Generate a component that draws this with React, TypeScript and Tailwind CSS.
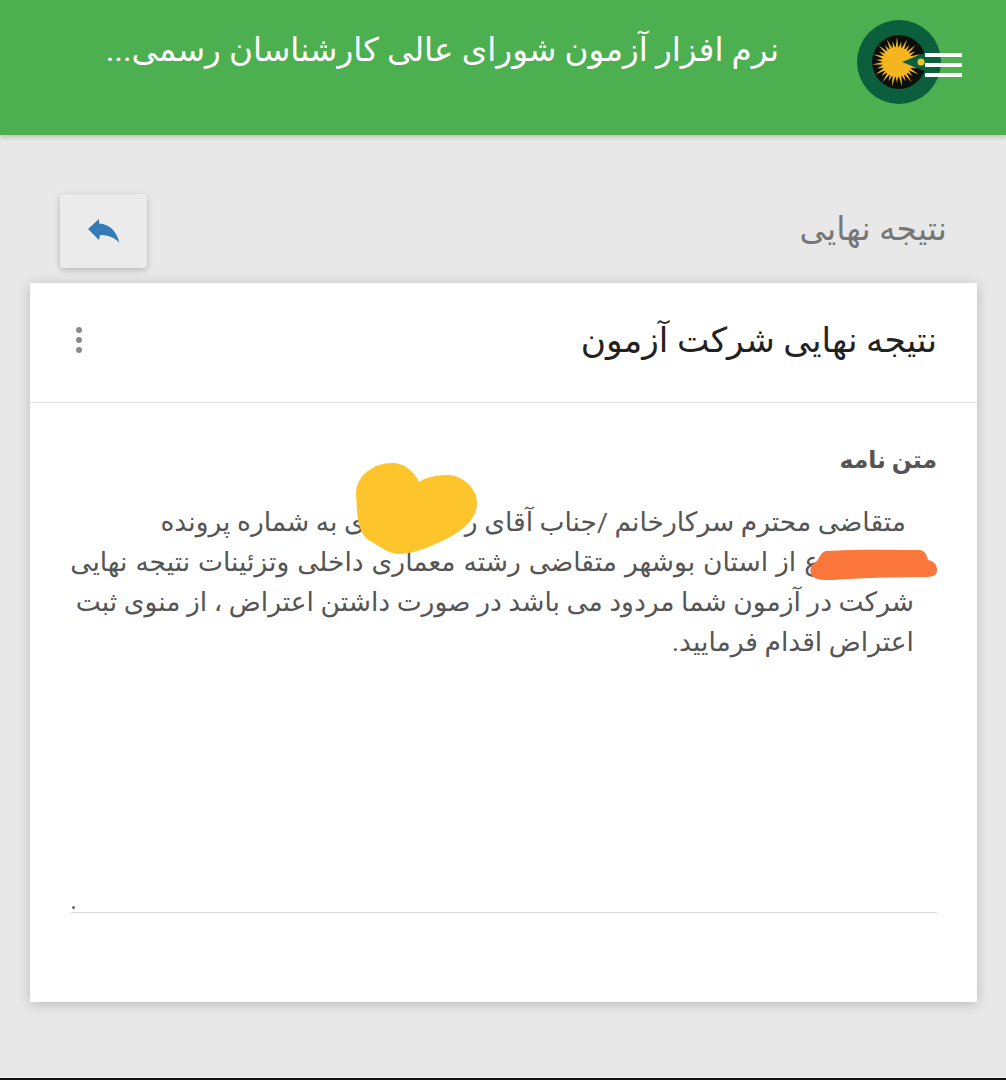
import React from 'react';

function Logo() {
  const spikes = [];
  for (let i = 0; i < 30; i++) {
    const a = ((i + 0.5) / 30) * Math.PI * 2;
    if (Math.abs(Math.sin(a)) < 0.22 && Math.cos(a) > 0) continue;
    const len = i % 2 === 0 ? 25 : 21;
    const b = 0.1;
    spikes.push(
      `${40 + Math.cos(a - b) * 14},${42 + Math.sin(a - b) * 14} ${40 + Math.cos(a) * len},${42 + Math.sin(a) * len} ${40 + Math.cos(a + b) * 14},${42 + Math.sin(a + b) * 14}`
    );
  }
  return (
    <svg width="84" height="84" viewBox="0 0 84 84" className="shrink-0">
      <circle cx="42" cy="42" r="42" fill="#0b5f3c" />
      <circle cx="42" cy="42" r="27" fill="#0a0f0c" />
      <circle cx="40" cy="42" r="15" fill="#f5b51e" />
      {spikes.map((p, i) => (
        <polygon key={i} points={p} fill="#f5b51e" />
      ))}
      <polygon points="45,42 70,32 70,52" fill="#0b5f3c" />
      <circle cx="64" cy="42" r="3.5" fill="#e8c52a" />
    </svg>
  );
}

export default function App() {
  return (
    <div dir="rtl" className="relative w-[1006px] h-[1080px] overflow-hidden bg-[#e8e8e8] font-['Roboto','Noto_Sans','DejaVu_Sans',sans-serif]">
      <header className="relative h-[135px] bg-[#4caf50] shadow-[0_2px_5px_rgba(0,0,0,0.2)] flex items-start pt-[20px] pr-[65px]">
        <Logo />
        <div className="mr-[78px] mt-[8px] text-[32.7px] leading-[44px] text-white whitespace-nowrap">نرم افزار آزمون شورای عالی کارشناسان رسمی...</div>
        <div className="absolute right-[44px] top-[53px] w-[37px] flex flex-col gap-[6px]">
          <span className="h-[4px] bg-white" />
          <span className="h-[4px] bg-white" />
          <span className="h-[4px] bg-white" />
        </div>
      </header>

      <div className="flex items-start justify-between pt-[59px] pr-[59px] pl-[60px] h-[148px]">
        <div className="mt-[13px] text-[33px] leading-[44px] text-[#777777]">نتیجه نهایی</div>
        <button className="w-[87px] h-[74px] rounded-[4px] bg-[#ebebeb] shadow-[0_2px_6px_rgba(0,0,0,0.22)] flex items-center justify-center">
          <svg width="32" height="26" viewBox="0 0 32 26" className="mb-[1px]">
            <path d="M0 11 11 1v4.5C22 6 29 14 31.5 25 27 19.500 20 17 12 17l-1 5Z" fill="#337ab7" />
          </svg>
        </button>
      </div>

      <main className="mr-[29px] ml-[30px] h-[719px] bg-white shadow-[0_2px_12px_rgba(0,0,0,0.2)] flex flex-col">
        <div className="h-[120px] border-b border-[#e2e2e2] flex items-center justify-between pr-[40px] pl-[46px] pb-[6px]">
          <h1 className="text-[34.400px] leading-[44px] text-[#222222] font-normal">نتیجه نهایی شرکت آزمون</h1>
          <div className="flex flex-col gap-[4px]">
            <span className="w-[6px] h-[6px] rounded-full bg-[#8a8a8a]" />
            <span className="w-[6px] h-[6px] rounded-full bg-[#8a8a8a]" />
            <span className="w-[6px] h-[6px] rounded-full bg-[#8a8a8a]" />
          </div>
        </div>
        <div className="pr-[40px] pl-[41px] pt-[39px]">
          <div className="text-[23.500px] leading-[36px] font-bold text-[#555555]">متن نامه</div>
          <div className="mt-[24px] pr-[23px] text-[26.500px] leading-[40px] text-[#555555] whitespace-nowrap">
            <div className="pr-[8px]">متقاضی محترم سرکارخانم /جناب آقای ر<span className="inline-block w-[100px]" />ی به شماره پرونده</div>
            <div className="pr-[94px] [word-spacing:1.4px]">ع از استان بوشهر متقاضی رشته معماری داخلی وتزئینات نتیجه نهایی</div>
            <div>شرکت در آزمون شما مردود می باشد در صورت داشتن اعتراض ، از منوی ثبت</div>
            <div>اعتراض اقدام فرمایید.</div>
          </div>
          <div className="mt-[231px] h-[20px] border-b border-[#d8d8d8]">
            <span className="block w-[3px] h-[3px] ml-[1px] mr-auto translate-y-[13px] rounded-full bg-[#666666]" />
          </div>
        </div>
      </main>

      <svg className="absolute left-[354px] top-[461px]" width="125" height="95" viewBox="0 0 125 95">
        <path d="M2 32C3 14 20 2 38 2C50 2 60 10 65 21C72 16 84 14 94 14C110 15 123 28 123 42C123 58 108 70 94 77C80 84 60 93 46 93C34 93 26 85 16 80C6 74 4 62 3 50Z" fill="#fdc42c" />
      </svg>
      <svg className="absolute left-[808px] top-[549px]" width="130" height="34" viewBox="0 0 130 34">
        <path d="M18 2C50 0 90 1 112 1C118 2 119 8 120 11C126 12 129 16 129 21C129 26 125 28 118 28C85 28 50 29 25 31C15 31 5 31 3 25C1 20 4 14 9 12C12 8 13 3 18 2Z" fill="#fb773c" />
      </svg>

      <div className="absolute bottom-0 left-0 right-0 h-[3px] bg-[#111111] border-t border-[#f4f4f4]" />
    </div>
  );
}
